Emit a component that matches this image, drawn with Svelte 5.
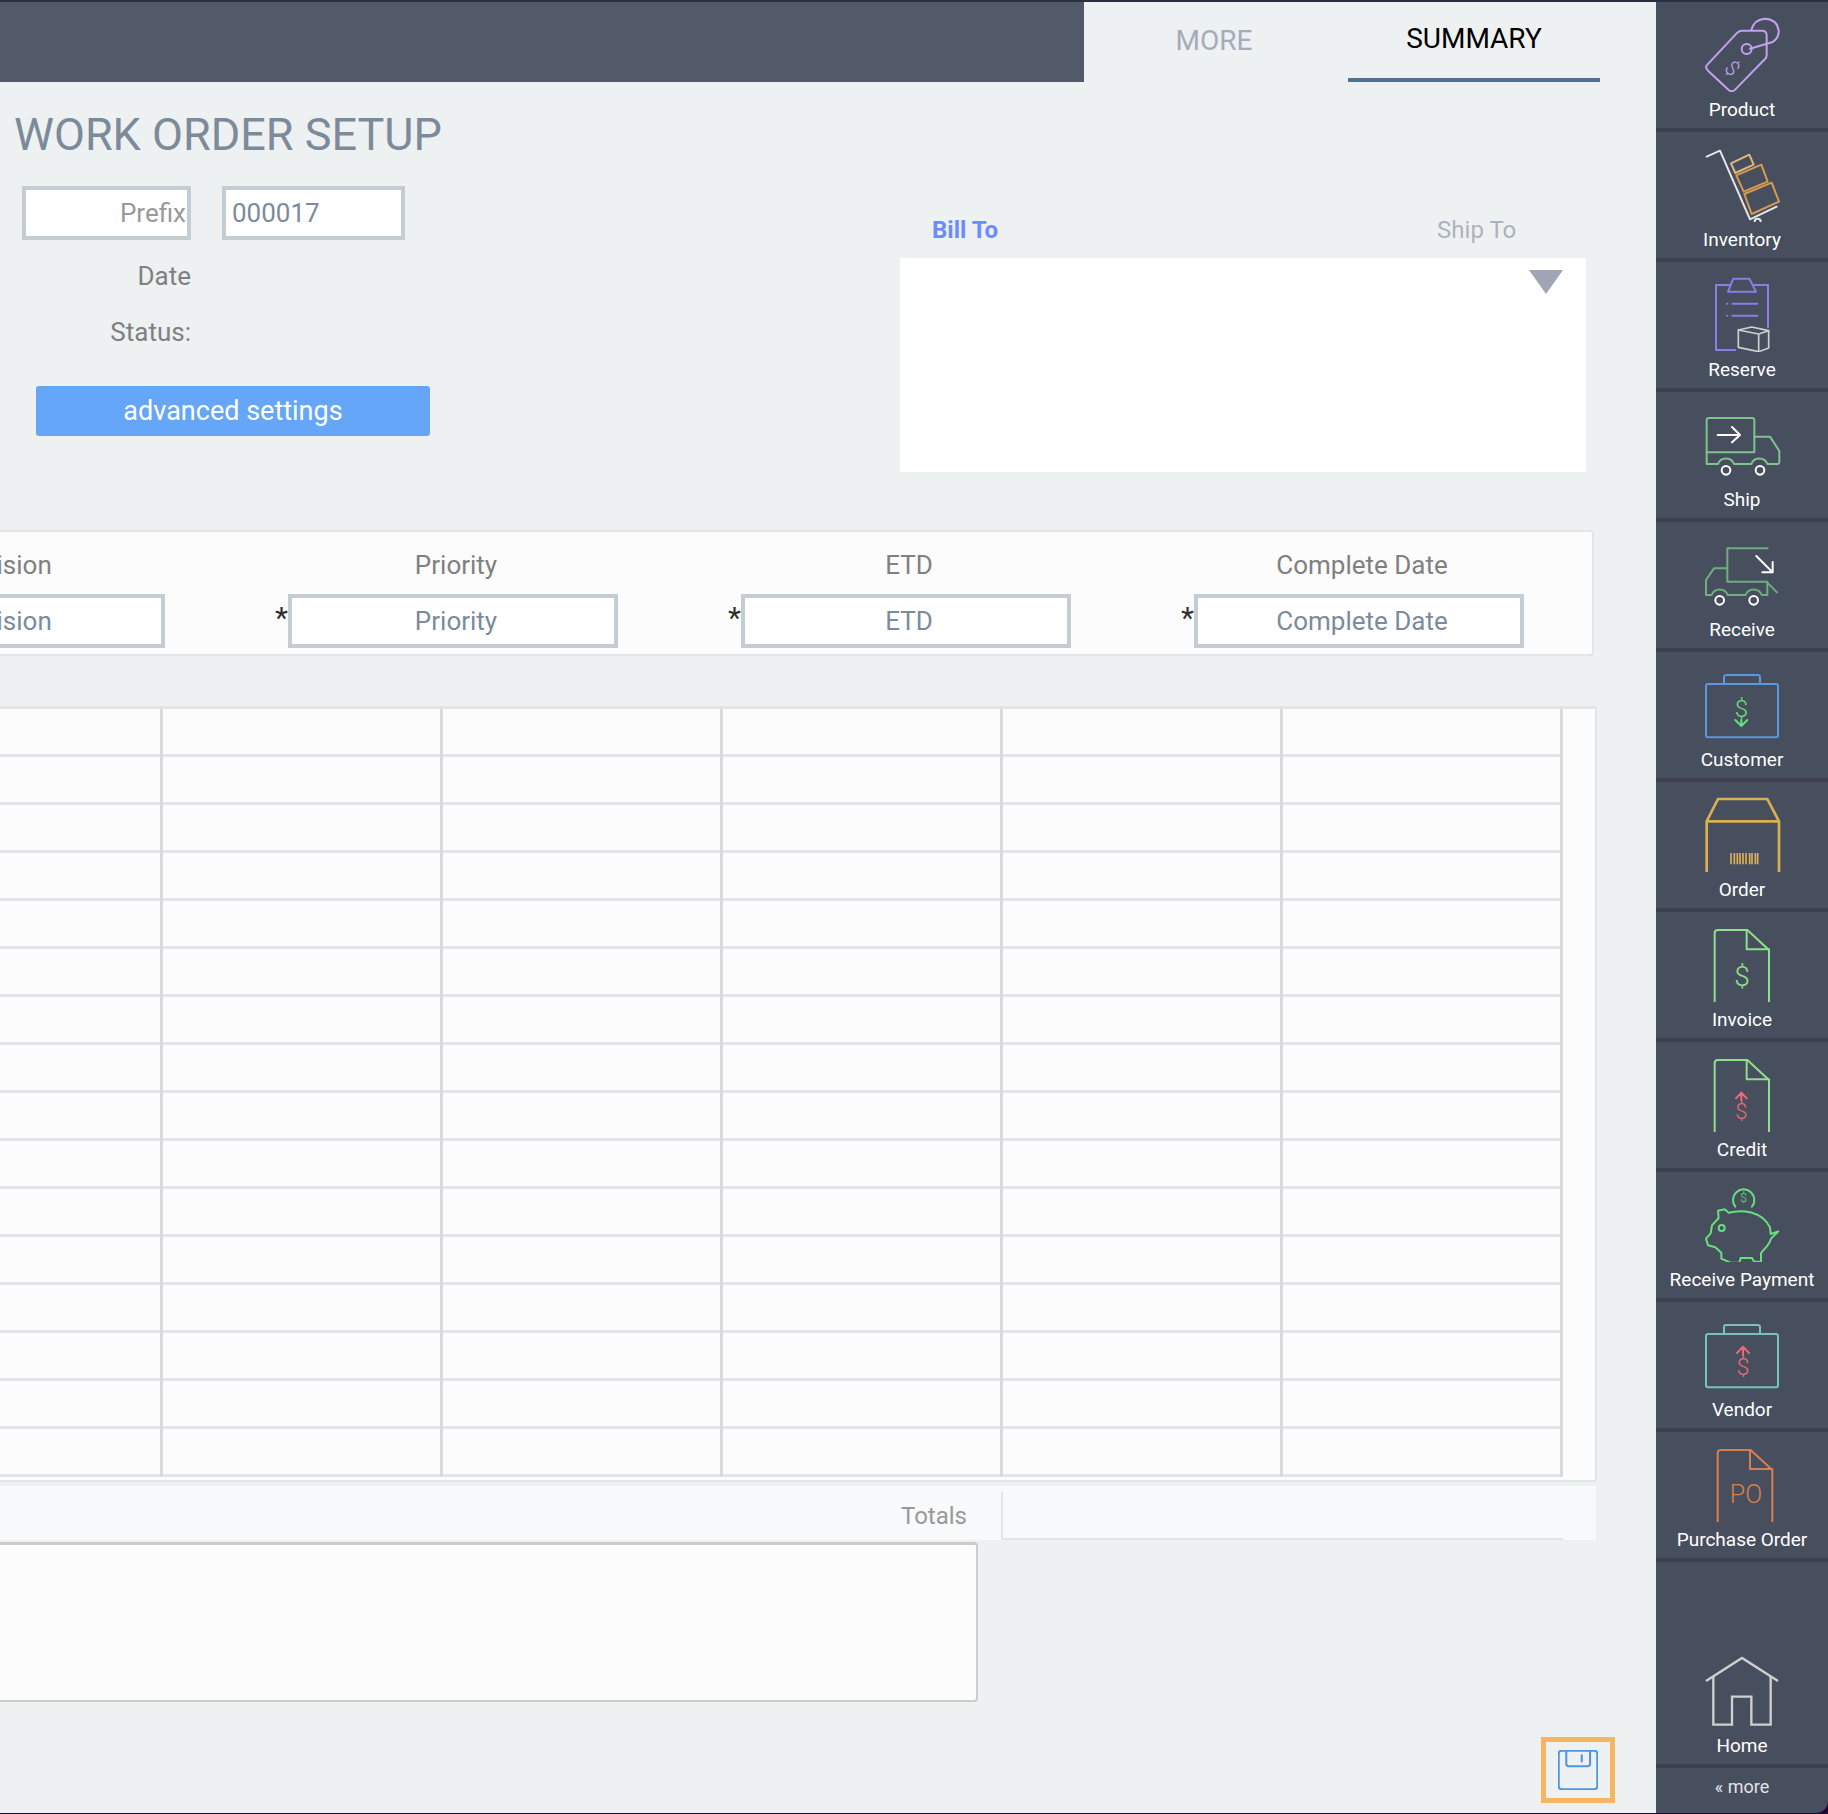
<script>
  const rows = Array.from({ length: 16 });
  const cols = Array.from({ length: 6 });
  const fields = [
    { label: 'Revision', star: false },
    { label: 'Priority', star: true },
    { label: 'ETD', star: true },
    { label: 'Complete Date', star: true }
  ];
</script>

<div class="page">
  <main class="main">
    <header class="header">
      <div class="bar"></div>
      <nav class="tabs">
        <div class="tab more">MORE</div>
        <div class="tab summary">SUMMARY</div>
      </nav>
    </header>

    <section class="top">
      <div class="left">
        <h1 class="title">WORK ORDER SETUP</h1>
        <div class="idrow">
          <div class="box prefix"><span>Prefix</span></div>
          <div class="box number">000017</div>
        </div>
        <div class="meta date">Date</div>
        <div class="meta status">Status:</div>
        <button class="adv">advanced settings</button>
      </div>
      <div class="right">
        <div class="addr-tabs">
          <span class="bill">Bill To</span>
          <span class="ship">Ship To</span>
        </div>
        <div class="addr"><i class="tri"></i></div>
      </div>
    </section>

    <section class="fields">
      {#each fields as f}
        <div class="field">
          <div class="flabel">{f.label}</div>
          <div class="finput">
            {#if f.star}<span class="star">*</span>{/if}
            <span>{f.label}</span>
          </div>
        </div>
      {/each}
    </section>

    <section class="table">
      {#each rows as _}
        <div class="row">
          {#each cols as __}<div class="cell"></div>{/each}
        </div>
      {/each}
    </section>

    <section class="totals">
      <div class="tlabel">Totals</div>
      <div class="tvalue"></div>
    </section>

    <div class="notes"></div>

    <button class="save" aria-label="Save">
      <svg viewBox="176 938 116 116" width="40" height="40" fill="none" stroke="#4f96dc" stroke-width="6" stroke-linejoin="round">
        <rect x="178" y="940" width="112" height="112" rx="9" />
        <path d="M200 940V978a7 7 0 0 0 7 7H262a7 7 0 0 0 7-7V940" />
        <path d="M245 953V971" stroke-linecap="round" />
      </svg>
    </button>
  </main>

  <aside class="side">
    <div class="item">
      <svg viewBox="18 6 516 270" width="172" height="90" fill="none" stroke="#c3a1f0" stroke-width="6" stroke-linejoin="round" stroke-linecap="round">
        <path d="M262 98 Q268 92 276 92H336Q350 92 350 106L350 166Q350 172 345 177L256 268Q246 278 236 270L174 212Q164 202 172 194Z" />
        <circle cx="290" cy="147" r="15" />
        <path d="M300 146 L368 126 Q388 112 386 92 Q382 58 345 56 Q312 58 304 90" />
        <text x="0" y="0" transform="translate(247,205) rotate(45)" class="sym" font-size="62" fill="#c3a1f0" stroke="none" text-anchor="middle" dominant-baseline="central">$</text>
      </svg>
      <span>Product</span>
    </div>

    <div class="item">
      <svg viewBox="18 396 516 270" width="172" height="90" fill="none" stroke-width="6" stroke-linejoin="round" stroke-linecap="round">
        <path d="M170 470L210 452L300 658L380 620" stroke="#e6e6e6" />
        <circle cx="323" cy="665" r="9" stroke="#e6e6e6" />
        <path d="M243 490L298 464L311 494L256 519Z" stroke="#e2b67c" />
        <path d="M259 526L334 494L353 545L281 575Z" stroke="#d89b4d" />
        <path d="M283 582L365 548L387 605L305 642Z" stroke="#d89b4d" />
      </svg>
      <span>Inventory</span>
    </div>

    <div class="item">
      <svg viewBox="18 786 516 270" width="172" height="90" fill="none" stroke-width="6" stroke-linejoin="round" stroke-linecap="round">
        <g stroke="#8a7de8">
          <path d="M238 855H198V1050H256" />
          <path d="M312 855H354V982" />
          <path d="M234 875L250 836H298L318 875Z" />
          <path d="M247 911H322M247 947H322" />
          <path d="M231 911h1M231 947h1" />
        </g>
        <g stroke="#cfcfcf" stroke-width="5">
          <path d="M265 990L305 981L356 992V1044L326 1055L265 1042Z" />
          <path d="M265 990L326 1002L356 992M326 1002V1055" />
        </g>
      </svg>
      <span>Reserve</span>
    </div>

    <div class="item">
      <svg viewBox="18 6 516 270" width="172" height="90" fill="none" stroke-width="6" stroke-linejoin="round" stroke-linecap="round">
        <g stroke="#7ec48e">
          <path d="M170 187V90Q170 84 176 84H307Q313 84 313 90V187Z" />
          <path d="M313 140H360L388 183V216Q388 222 382 222H352C344 200 312 200 304 222H252C244 200 212 200 204 222H170V187" />
        </g>
        <g stroke="#fff">
          <circle cx="228" cy="241" r="13" />
          <circle cx="330" cy="241" r="13" />
          <path d="M203 135H270M246 111L270 135L246 157" />
        </g>
      </svg>
      <span>Ship</span>
    </div>

    <div class="item">
      <svg viewBox="18 396 516 270" width="172" height="90" fill="none" stroke-width="6" stroke-linejoin="round" stroke-linecap="round">
        <g stroke="#6fae7d">
          <path d="M353 475H232V575H352V615H335C327 593 295 593 287 615H233C225 593 193 593 185 615H168V570L192 535H232" />
          <path d="M352 578L381 607" />
        </g>
        <g stroke="#fff">
          <circle cx="209" cy="631" r="13" />
          <circle cx="311" cy="631" r="13" />
          <path d="M319 498L368 547M368 516V547H337" />
        </g>
      </svg>
      <span>Receive</span>
    </div>

    <div class="item">
      <svg viewBox="18 786 516 270" width="172" height="90" fill="none" stroke-width="6" stroke-linejoin="round" stroke-linecap="round">
        <g stroke="#5b97dd">
          <rect x="168" y="882" width="216" height="160" rx="6" />
          <path d="M222 882V862Q222 855 229 855H323Q330 855 330 862V882" />
        </g>
        <text x="274" y="958" class="sym" font-size="72" fill="#66e07f" stroke="none" text-anchor="middle" dominant-baseline="central">$</text>
        <path d="M274 990V1008M256 990L274 1008L292 990" stroke="#66e07f" />
      </svg>
      <span>Customer</span>
    </div>

    <div class="item">
      <svg viewBox="18 6 516 270" width="172" height="90" fill="none" stroke="#d9b152" stroke-width="8" stroke-linejoin="round">
        <path d="M170 124L204 57H352L387 124V280H170Z" />
        <path d="M170 124H387" />
        <path d="M243 219V253M253 219V253M262 219V253M270 219V253M279 219V253M288 219V253M299 219V253M306 219V253M316 219V253M323 219V253" stroke-width="5" />
      </svg>
      <span>Order</span>
    </div>

    <div class="item">
      <svg viewBox="18 396 516 270" width="172" height="90" fill="none" stroke-width="6" stroke-linejoin="round" stroke-linecap="round">
        <g stroke="#8fe08a">
          <path d="M292 450H204Q194 450 194 460V664Q194 675 204 675H347Q357 675 357 664V510Z" />
          <path d="M290 450V508H357" />
        </g>
        <text x="276" y="590" class="sym" font-size="84" fill="#8fe08a" stroke="none" text-anchor="middle" dominant-baseline="central">$</text>
      </svg>
      <span>Invoice</span>
    </div>

    <div class="item">
      <svg viewBox="18 786 516 270" width="172" height="90" fill="none" stroke-width="6" stroke-linejoin="round" stroke-linecap="round">
        <g stroke="#8fe08a">
          <path d="M292 840H204Q194 840 194 850V1054Q194 1065 204 1065H347Q357 1065 357 1054V900Z" />
          <path d="M290 840V898H357" />
        </g>
        <text x="274" y="993" class="sym" font-size="66" fill="#e86b78" stroke="none" text-anchor="middle" dominant-baseline="central">$</text>
        <path d="M274 938V962M258 955L274 938L290 955" stroke="#e86b78" />
      </svg>
      <span>Credit</span>
    </div>

    <div class="item">
      <svg viewBox="18 6 516 270" width="172" height="90" fill="none" stroke="#66e07f" stroke-width="6" stroke-linejoin="round" stroke-linecap="round">
        <path d="M256 110A32 32 0 1 1 306 110" />
        <text x="281" y="85" class="sym" font-size="36" fill="#66e07f" stroke="none" text-anchor="middle" dominant-baseline="central">$</text>
        <path d="M236 128C275 118 335 122 360 172L362 192L385 184L363 206C357 228 340 238 333 250V275H312L306 264H272L268 278H242L214 266V248L196 232L174 226L168 206L182 190L186 166L206 144L204 122L224 118Z" />
        <circle cx="215" cy="174" r="9" />
      </svg>
      <span>Receive Payment</span>
    </div>

    <div class="item">
      <svg viewBox="18 396 516 270" width="172" height="90" fill="none" stroke-width="6" stroke-linejoin="round" stroke-linecap="round">
        <g stroke="#79c2bf">
          <rect x="168" y="492" width="216" height="160" rx="6" />
          <path d="M222 492V472Q222 465 229 465H323Q330 465 330 472V492" />
        </g>
        <text x="279" y="590" class="sym" font-size="70" fill="#e86b78" stroke="none" text-anchor="middle" dominant-baseline="central">$</text>
        <path d="M279 530V556M261 549L279 530L297 549" stroke="#e86b78" />
      </svg>
      <span>Vendor</span>
    </div>

    <div class="item">
      <svg viewBox="18 786 516 270" width="172" height="90" fill="none" stroke="#d97f4f" stroke-width="6" stroke-linejoin="round" stroke-linecap="round">
        <path d="M302 840H214Q203 840 203 850V1054Q203 1065 214 1065H356Q367 1065 367 1054V900Z" />
        <path d="M300 840V897H367" />
        <text x="288" y="972" class="sym" font-size="75" fill="#d97f4f" stroke="none" text-anchor="middle" dominant-baseline="central">PO</text>
      </svg>
      <span>Purchase Order</span>
    </div>

    <div class="spacer"></div>

    <div class="item home">
      <svg viewBox="468 606 516 270" width="172" height="90" fill="none" stroke="#cfcfcf" stroke-width="7" stroke-linejoin="miter">
        <path d="M618 735L726 666L834 735" />
        <path d="M640 722V866H696V782H754V866H812V722" />
      </svg>
      <span>Home</span>
    </div>
    <div class="moreitem">« more</div>
  </aside>
</div>

<style>
  :global(body) {
    margin: 0;
    background: #1d0b33;
  }
  * {
    box-sizing: border-box;
  }
  .page {
    width: 1828px;
    height: 1813px;
    display: flex;
    font-family: Roboto, "Liberation Sans", sans-serif;
    overflow: hidden;
    border-top: 2px solid #2b3040;
    border-bottom-right-radius: 12px;
    position: relative;
  }
  .main {
    width: 1656px;
    flex: none;
    display: flex;
    flex-direction: column;
    background: #edf1f2;
    overflow: hidden;
  }
  .header {
    height: 80px;
    display: flex;
    flex: none;
  }
  .bar {
    width: 1084px;
    background: #525969;
  }
  .tabs {
    display: flex;
  }
  .tab {
    font-size: 28px;
    display: flex;
    justify-content: center;
  }
  .more {
    width: 260px;
    color: #a6abb9;
    padding-top: 22px;
  }
  .summary {
    width: 252px;
    margin-left: 4px;
    color: #000;
    padding-top: 20px;
    border-bottom: 4px solid #507391;
  }
  .top {
    display: flex;
    flex: none;
  }
  .left {
    width: 900px;
    flex: none;
  }
  .title {
    margin: 28px 0 26px 14px;
    font-size: 45px;
    line-height: 50px;
    font-weight: 400;
    color: #7c8a9a;
    white-space: nowrap;
  }
  .idrow {
    display: flex;
    margin-left: 22px;
    gap: 31px;
  }
  .box {
    height: 54px;
    border: 4px solid #c3cdd2;
    background: #fff;
    font-size: 26px;
    display: flex;
    align-items: center;
    overflow: hidden;
  }
  .prefix {
    width: 169px;
    justify-content: flex-end;
    color: #999;
    padding-right: 0;
  }
  .prefix span {
    margin-right: 1px;
  }
  .number {
    width: 183px;
    color: #7c8a9c;
    padding-left: 6px;
  }
  .meta {
    width: 191px;
    text-align: right;
    font-size: 26px;
    line-height: 36px;
    color: #808080;
  }
  .date {
    margin-top: 18px;
  }
  .status {
    margin-top: 20px;
  }
  .adv {
    display: block;
    margin: 36px 0 0 36px;
    width: 394px;
    height: 50px;
    border: 0;
    border-radius: 3px;
    background: #66a6f8;
    color: #fff;
    font: 400 27px Roboto, "Liberation Sans", sans-serif;
    padding: 0;
  }
  .right {
    width: 686px;
    flex: none;
    padding-top: 130px;
  }
  .addr-tabs {
    display: flex;
    height: 36px;
    margin-bottom: 10px;
    font-size: 24px;
    line-height: 36px;
    position: relative;
  }
  .bill {
    margin-left: 32px;
    color: #6b8cff;
    font-weight: 700;
  }
  .ship {
    margin-left: 439px;
    color: #aeb2c0;
  }
  .addr {
    height: 214px;
    background: #fff;
    position: relative;
  }
  .tri {
    position: absolute;
    left: 629px;
    top: 12px;
    width: 0;
    height: 0;
    border-left: 17px solid transparent;
    border-right: 17px solid transparent;
    border-top: 24px solid #a0a5b5;
  }
  .fields {
    flex: none;
    margin: 58px 0 0 -200px;
    width: 1794px;
    height: 126px;
    background: #fcfcfc;
    border: 2px solid #e1e6e9;
    border-radius: 4px;
    padding: 16px 0 0 33px;
    display: grid;
    grid-template-columns: repeat(4, 330px);
    column-gap: 123px;
  }
  .flabel {
    height: 34px;
    line-height: 34px;
    font-size: 26px;
    color: #808080;
    text-align: center;
    padding-left: 6px;
    margin-bottom: 12px;
  }
  .finput {
    position: relative;
    height: 54px;
    border: 4px solid #c3cdd2;
    background: #fff;
    font-size: 26px;
    color: #7c8a9c;
    display: flex;
    align-items: center;
    justify-content: center;
    padding-left: 6px;
  }
  .star {
    position: absolute;
    right: 100%;
    margin-right: 4px;
    top: 2px;
    color: #2f2f2f;
    font-size: 30px;
    line-height: 36px;
  }
  .table {
    flex: none;
    margin: 50px 0 0 -119px;
    width: 1716px;
    height: 776px;
    background: #fcfcfc;
    border-top: 3px solid #e1e4e8;
    border-right: 2px solid #e1e4e8;
    border-bottom: 2px solid #e1e4e8;
    overflow: hidden;
  }
  .row {
    display: flex;
    height: 48px;
    width: max-content;
    border-bottom: 3px solid #e1e4e8;
  }
  .cell {
    width: 280px;
    flex: none;
    border-right: 3px solid #d8dadc;
    margin-bottom: -3px;
  }
  .cell:first-child {
    width: 282px;
  }
  .totals {
    flex: none;
    margin: 4px 0 0 -10px;
    width: 1606px;
    height: 54px;
    background: #f7f9fb;
    display: flex;
    padding-top: 6px;
  }
  .tlabel {
    width: 1011px;
    padding-right: 34px;
    text-align: right;
    font-size: 24px;
    line-height: 48px;
    color: #999;
  }
  .tvalue {
    width: 562px;
    border-left: 2px solid #e1e4e8;
    border-bottom: 2px solid #e1e4e8;
  }
  .notes {
    flex: none;
    margin: 2px 0 0 -10px;
    width: 988px;
    height: 160px;
    background: #fcfcfc;
    border: 2px solid #ccc;
    border-top-width: 3px;
    border-radius: 4px;
  }
  .save {
    flex: none;
    align-self: flex-end;
    margin: 35px 41px 0 0;
    width: 74px;
    height: 66px;
    border: 5px solid #f5b561;
    background: transparent;
    padding: 0;
    display: flex;
    align-items: center;
    justify-content: center;
  }
  .side {
    width: 172px;
    flex: none;
    display: flex;
    flex-direction: column;
    background: #474e5d;
    color: #fff;
    font-size: 19px;
  }
  .item {
    height: 130px;
    flex: none;
    display: flex;
    flex-direction: column;
    align-items: center;
    border-bottom: 4px solid #3b404c;
  }
  .item svg {
    display: block;
    flex: none;
  }
  .item span {
    line-height: 36px;
    white-space: nowrap;
  }
  .sym {
    font-family: Roboto, sans-serif;
    font-weight: 300;
  }
  .spacer {
    height: 76px;
    flex: none;
  }
  .home {
    height: 130px;
  }
  .moreitem {
    flex: 1;
    text-align: center;
    font-size: 18px;
    line-height: 38px;
    color: #e2e4e8;
  }
</style>
